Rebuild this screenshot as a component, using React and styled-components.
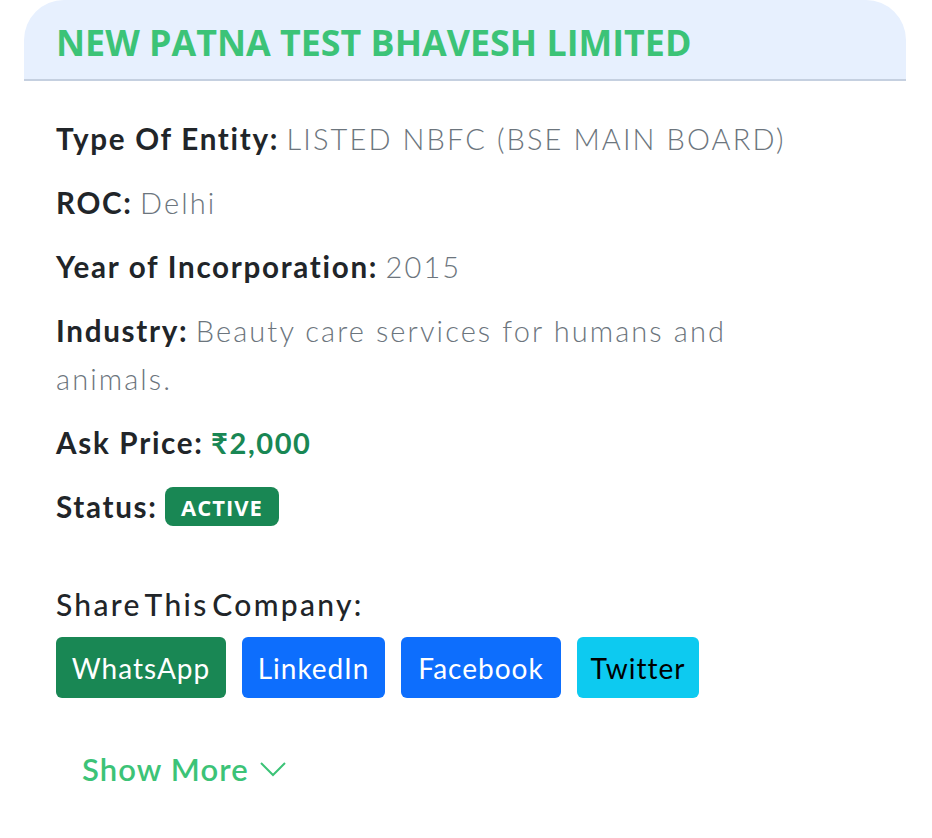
import React from 'react';
import styled, { createGlobalStyle } from 'styled-components';

const GlobalStyle = createGlobalStyle`
  body {
    margin: 0;
    background: #fff;
    font-family: 'Lato', 'Open Sans', sans-serif;
  }
`;

const Page = styled.div`
  padding: 0 26px 0 24px;
`;
const Card = styled.div`
  width: 882px;
`;
const Header = styled.div`
  background: #e7f0fe;
  border-radius: 40px 40px 0 0;
  border-bottom: 2px solid #c5d0e0;
  height: 81px;
  display: flex;
  align-items: center;
  padding: 0 32px;
  box-sizing: border-box;
`;
const Title = styled.h2`
  margin: 0;
  font-family: 'Open Sans', sans-serif;
  font-weight: 700;
  font-size: 35.8px;
  color: #3cc377;
  padding-top: 4px;
`;
const Body = styled.div`
  padding: 34px 32px 0;
`;
const Row = styled.p`
  margin: 0 0 16px;
  font-size: 29px;
  line-height: 48px;
  max-width: 760px;
  color: #212529;
`;
const Label = styled.span`
  font-size: 29.6px;
  font-weight: 700;
  letter-spacing: 1.7px;
`;
const Value = styled.span`
  font-weight: 300;
  color: #6c757d;
  letter-spacing: 2.1px;
`;
const Price = styled.span`
  font-weight: 700;
  color: #198754;
  letter-spacing: 1.6px;
`;
const Badge = styled.span`
  display: inline-flex;
  align-items: center;
  height: 39px;
  padding: 2px 16px 0;
  box-sizing: border-box;
  border-radius: 8px;
  background: #198754;
  color: #fff;
  font-family: 'Open Sans', sans-serif;
  font-weight: 700;
  font-size: 22px;
  vertical-align: 2px;
  letter-spacing: 1px;
`;
const ShareTitle = styled.h6`
  margin: 49px 0 9px;
  font-size: 30px;
  line-height: 48px;
  font-weight: 500;
  color: #212529;
  letter-spacing: 2.3px;
  word-spacing: -6px;
`;
const Buttons = styled.div`
  display: flex;
  gap: 16px;
`;
const ShareButton = styled.a`
  display: inline-flex;
  align-items: center;
  justify-content: center;
  height: 61px;
  box-sizing: border-box;
  border-radius: 6px;
  font-size: 28px;
  font-weight: 400;
  letter-spacing: 1px;
  background: ${p => p.bg};
  color: ${p => p.fg || '#fff'};
  text-decoration: none;
`;
const ShowMore = styled.button`
  margin: 52px 0 0 26px;
  padding: 0;
  border: none;
  background: none;
  display: flex;
  align-items: center;
  gap: 10px;
  font-family: 'Lato', sans-serif;
  font-size: 31px;
  font-weight: 600;
  color: #3cc377;
  letter-spacing: 1.1px;
`;

const buttons = [
  { name: 'WhatsApp', bg: '#198754', w: 170 },
  { name: 'LinkedIn', bg: '#0d6efd', w: 143 },
  { name: 'Facebook', bg: '#0d6efd', w: 160 },
  { name: 'Twitter', bg: '#0dcaf0', fg: '#000', w: 122 },
];

export default function App() {
  return (
    <Page>
      <GlobalStyle />
      <Card>
        <Header>
          <Title>NEW PATNA TEST BHAVESH LIMITED</Title>
        </Header>
        <Body>
          <Row>
            <Label>Type Of Entity:</Label> <Value>LISTED NBFC (BSE MAIN BOARD)</Value>
          </Row>
          <Row>
            <Label>ROC:</Label> <Value>Delhi</Value>
          </Row>
          <Row>
            <Label>Year of Incorporation:</Label> <Value>2015</Value>
          </Row>
          <Row>
            <Label>Industry:</Label> <Value>Beauty care services for humans and animals.</Value>
          </Row>
          <Row>
            <Label>Ask Price:</Label> <Price>₹2,000</Price>
          </Row>
          <Row>
            <Label>Status:</Label> <Badge>ACTIVE</Badge>
          </Row>
          <ShareTitle>Share This Company:</ShareTitle>
          <Buttons>
            {buttons.map(b => (
              <ShareButton key={b.name} bg={b.bg} fg={b.fg} style={{ width: b.w }}>
                {b.name}
              </ShareButton>
            ))}
          </Buttons>
          <ShowMore>
            Show More
            <svg width="28" height="16" viewBox="0 0 28 16" fill="none">
              <path d="M2 2l12 12L26 2" stroke="#3cc377" strokeWidth="2" />
            </svg>
          </ShowMore>
        </Body>
      </Card>
    </Page>
  );
}
